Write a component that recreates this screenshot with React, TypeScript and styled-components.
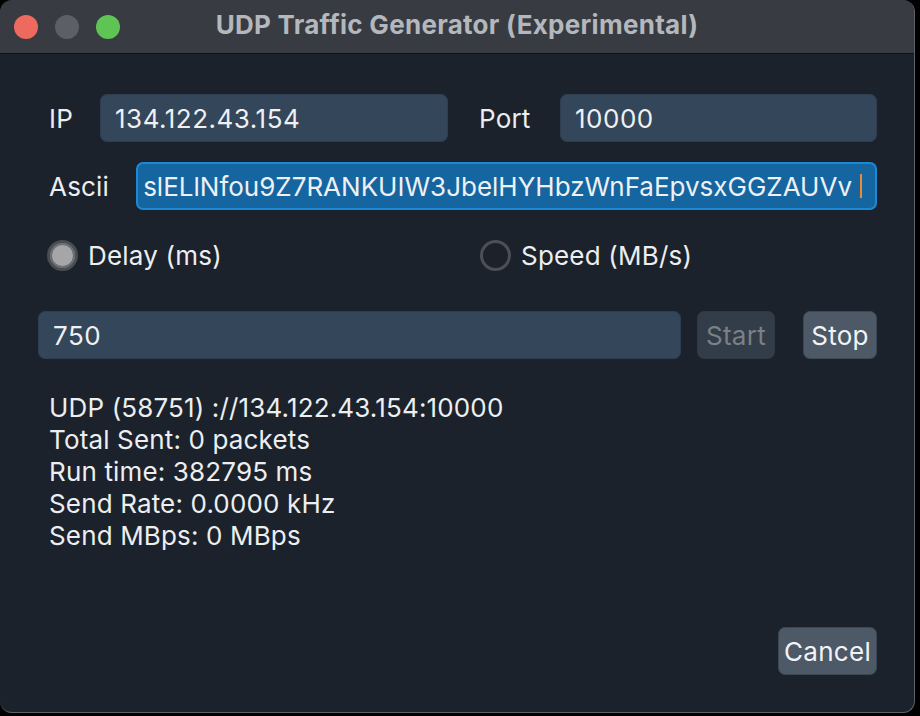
import React from "react";
import styled, { createGlobalStyle } from "styled-components";

const Global = createGlobalStyle`
  html, body { margin: 0; padding: 0; background: #000; }
  body { width: 920px; height: 716px; overflow: hidden; font-family: Inter, "Noto Sans", sans-serif; }
`;

const Window = styled.div`
  width: 915px;
  height: 713px;
  box-sizing: border-box;
  border-radius: 12px;
  border-right: 1px solid #5c6168;
  border-bottom: 1px solid #5c6168;
  background: #1b222c;
  overflow: hidden;
  display: flex;
  flex-direction: column;
`;

const TitleBar = styled.div`
  height: 53px;
  flex: none;
  background: #383c42;
  border-bottom: 1px solid #0f1216;
  display: flex;
  align-items: center;
  position: relative;
`;

const Lights = styled.div`
  display: flex;
  gap: 17px;
  padding-left: 14px;
`;

const Light = styled.span<{ $c: string }>`
  width: 24px;
  height: 24px;
  border-radius: 50%;
  background: ${(p) => p.$c};
`;

const Title = styled.div`
  position: absolute;
  left: 0;
  right: 0;
  top: 9px;
  text-align: center;
  font-weight: 700;
  font-size: 26px;
  line-height: 32px;
  color: #b4b7bb;
  letter-spacing: 0.28px;
`;

const Body = styled.div`
  flex: 1;
  display: flex;
  flex-direction: column;
  padding: 40px 37px 37px 38px;
  color: #eceef0;
  font-size: 26px;
  letter-spacing: 0.2px;
`;

const Row = styled.div<{ $mt?: number }>`
  display: flex;
  align-items: center;
  margin-top: ${(p) => p.$mt ?? 0}px;
`;

const Label = styled.div<{ $w: number; $pl?: number }>`
  width: ${(p) => p.$w}px;
  padding-left: ${(p) => p.$pl ?? 0}px;
  box-sizing: border-box;
  flex: none;
`;

const Field = styled.div<{ $w?: number; $focus?: boolean }>`
  ${(p) => (p.$w ? `width: ${p.$w}px; flex: none;` : "flex: 1;")}
  min-width: 0;
  height: 48px;
  box-sizing: border-box;
  border-radius: 7px;
  background: ${(p) => (p.$focus ? "#1565a1" : "#33465a")};
  border: ${(p) => (p.$focus ? "2px solid #1b8ad6" : "1px solid #2e3e50")};
  display: flex;
  align-items: center;
  padding: 0 ${(p) => (p.$focus ? 13 : 14)}px;
  color: #eef0f2;
  font-size: 26px;
  letter-spacing: ${(p) => (p.$focus ? 0 : 0.5)}px;
  white-space: nowrap;
  overflow: hidden;
  justify-content: ${(p) => (p.$focus ? "flex-end" : "flex-start")};
`;

const Caret = styled.span`
  display: inline-block;
  width: 2px;
  height: 24px;
  background: #f08a2c;
  margin-left: 8px;
  flex: none;
`;

const Radio = styled.div<{ $w?: number }>`
  display: flex;
  align-items: center;
  gap: 10px;
  ${(p) => (p.$w ? `width: ${p.$w}px; flex: none;` : "")}
`;

const RadioDot = styled.span<{ $on?: boolean }>`
  width: 31px;
  height: 31px;
  box-sizing: border-box;
  border-radius: 50%;
  border: 3px solid ${(p) => (p.$on ? "#4a4e53" : "#4b5056")};
  background: ${(p) => (p.$on ? "#a5a6a8" : "transparent")};
  box-shadow: ${(p) => (p.$on ? "inset 0 0 0 2px #6b6e72" : "none")};
  flex: none;
`;

const Button = styled.div<{ $disabled?: boolean; $w: number }>`
  width: ${(p) => p.$w}px;
  height: 48px;
  box-sizing: border-box;
  border-radius: 7px;
  background: ${(p) => (p.$disabled ? "#323d49" : "#4d5966")};
  border: 1px solid ${(p) => (p.$disabled ? "#2f3944" : "#3e4853")};
  color: ${(p) => (p.$disabled ? "#7b8086" : "#f2f3f4")};
  display: flex;
  align-items: center;
  justify-content: center;
  font-size: 26px;
  letter-spacing: 0.3px;
  flex: none;
`;

const Status = styled.div`
  margin-top: 33px;
  padding-left: 11px;
  line-height: 32px;
  font-size: 26px;
  letter-spacing: 0.15px;
`;

const Footer = styled.div`
  margin-top: auto;
  display: flex;
  justify-content: flex-end;
`;

export default function App() {
  return (
    <>
      <Global />
      <Window>
        <TitleBar>
          <Lights>
            <Light $c="#ee6a5f" />
            <Light $c="#5c6066" />
            <Light $c="#5ec453" />
          </Lights>
          <Title>UDP Traffic Generator (Experimental)</Title>
        </TitleBar>
        <Body>
          <Row>
            <Label $w={62} $pl={11}>IP</Label>
            <Field $w={348}>134.122.43.154</Field>
            <Label $w={112} $pl={31}>Port</Label>
            <Field>10000</Field>
          </Row>
          <Row $mt={20}>
            <Label $w={98} $pl={11}>Ascii</Label>
            <Field $focus>
              slELlNfou9Z7RANKUIW3JbelHYHbzWnFaEpvsxGGZAUVv
              <Caret />
            </Field>
          </Row>
          <Row $mt={30}>
            <Label $w={9} />
            <Radio $w={433}>
              <RadioDot $on />
              Delay (ms)
            </Radio>
            <Radio>
              <RadioDot />
              Speed (MB/s)
            </Radio>
          </Row>
          <Row $mt={40}>
            <Field>750</Field>
            <Label $w={16} />
            <Button $w={78} $disabled>Start</Button>
            <Label $w={28} />
            <Button $w={74}>Stop</Button>
          </Row>
          <Status>
            <div>UDP (58751) ://134.122.43.154:10000</div>
            <div>Total Sent: 0 packets</div>
            <div>Run time: 382795 ms</div>
            <div>Send Rate: 0.0000 kHz</div>
            <div>Send MBps: 0 MBps</div>
          </Status>
          <Footer>
            <Button $w={99}>Cancel</Button>
          </Footer>
        </Body>
      </Window>
    </>
  );
}
